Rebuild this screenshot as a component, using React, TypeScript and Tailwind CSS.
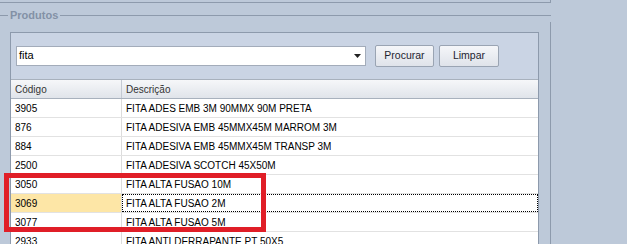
import React from "react";

const rows = [
  { codigo: "3905", descricao: "FITA ADES EMB 3M 90MMX 90M PRETA" },
  { codigo: "876", descricao: "FITA ADESIVA EMB 45MMX45M MARROM 3M" },
  { codigo: "884", descricao: "FITA ADESIVA EMB 45MMX45M TRANSP 3M" },
  { codigo: "2500", descricao: "FITA ADESIVA SCOTCH 45X50M" },
  { codigo: "3050", descricao: "FITA ALTA FUSAO 10M" },
  { codigo: "3069", descricao: "FITA ALTA FUSAO 2M" },
  { codigo: "3077", descricao: "FITA ALTA FUSAO 5M" },
  { codigo: "2933", descricao: "FITA ANTI DERRAPANTE PT 50X5" },
];

const selected = "3069";

export default function App() {
  return (
    <div
      className="relative w-[627px] h-[244px] overflow-hidden bg-[#bdc9d9] text-black"
      style={{ fontFamily: '"Liberation Sans", Arial, sans-serif' }}
    >
      {/* painel de cima, só a borda aparece */}
      <div className="ml-[-2px] w-[553px] h-[3px] border-b border-r border-[#8d9aac]" />

      {/* group box Produtos */}
      <div className="ml-[-2px] w-[553px] mt-[5px]">
        <div className="flex items-center h-[14px]">
          <div className="w-[10px] h-px bg-[#8d9aac]" />
          <span className="px-[2px] text-[11px] font-bold text-[#8391a6] leading-none">
            Produtos
          </span>
          <div className="flex-1 h-px bg-[#8d9aac]" />
        </div>
        <div className="border-r border-[#8d9aac] h-[240px] pl-[12px] pr-[11px] pt-[10px]">
          <div className="border-l border-t border-r border-[#8d9aac] bg-[#cad4e4] h-[220px]">
            {/* busca */}
            <div className="flex items-center gap-[5px] pl-[5px] pt-[12px] h-[33px]">
              <div className="flex items-center w-[350px] h-[20px] bg-white border border-[#a3acba] pl-[2px] pr-[4px]">
                <span className="flex-1 text-[11px]">fita</span>
                <svg width="7" height="4" viewBox="0 0 7 4">
                  <path d="M0 0h7L3.5 4z" fill="#222" />
                </svg>
              </div>
              <div className="flex gap-[5px] ml-[4px]">
                <button className="w-[59px] h-[22px] rounded-[2px] border border-[#9aa4b3] bg-gradient-to-b from-[#f5f6f9] to-[#dfe3ea] text-[10.5px] text-[#1e2430]">
                  Procurar
                </button>
                <button className="w-[60px] h-[22px] rounded-[2px] border border-[#9aa4b3] bg-gradient-to-b from-[#f5f6f9] to-[#dfe3ea] text-[10.5px] text-[#1e2430]">
                  Limpar
                </button>
              </div>
            </div>

            {/* grid */}
            <div className="mt-[13px] bg-white text-[10px]">
              <div className="flex h-[20px] border-t border-b border-[#a8b1bd] bg-gradient-to-b from-[#f6f7f9] to-[#e0e4ea] text-[#333]">
                <div className="w-[111px] pl-[4px] flex items-center border-r border-[#c4cad3]">
                  Código
                </div>
                <div className="flex-1 pl-[4px] flex items-center">Descrição</div>
              </div>
              {rows.map((r) => {
                const isSel = r.codigo === selected;
                return (
                  <div key={r.codigo} className="flex h-[19px] border-b border-[#e2e2e2]">
                    <div
                      className={`w-[111px] pl-[4px] flex items-center border-r border-[#dcdcdc] ${
                        isSel ? "bg-[#fde6a6]" : ""
                      }`}
                    >
                      {r.codigo}
                    </div>
                    <div
                      className={`flex-1 pl-[3px] flex items-center ${
                        isSel ? "border border-dotted border-black" : "border border-transparent"
                      }`}
                    >
                      {r.descricao}
                    </div>
                  </div>
                );
              })}
            </div>
          </div>
        </div>
      </div>

      {/* marcação vermelha */}
      <div className="absolute left-[4px] top-[173px] w-[262px] h-[59px] border-[5px] border-[#e01e27]" />
    </div>
  );
}
